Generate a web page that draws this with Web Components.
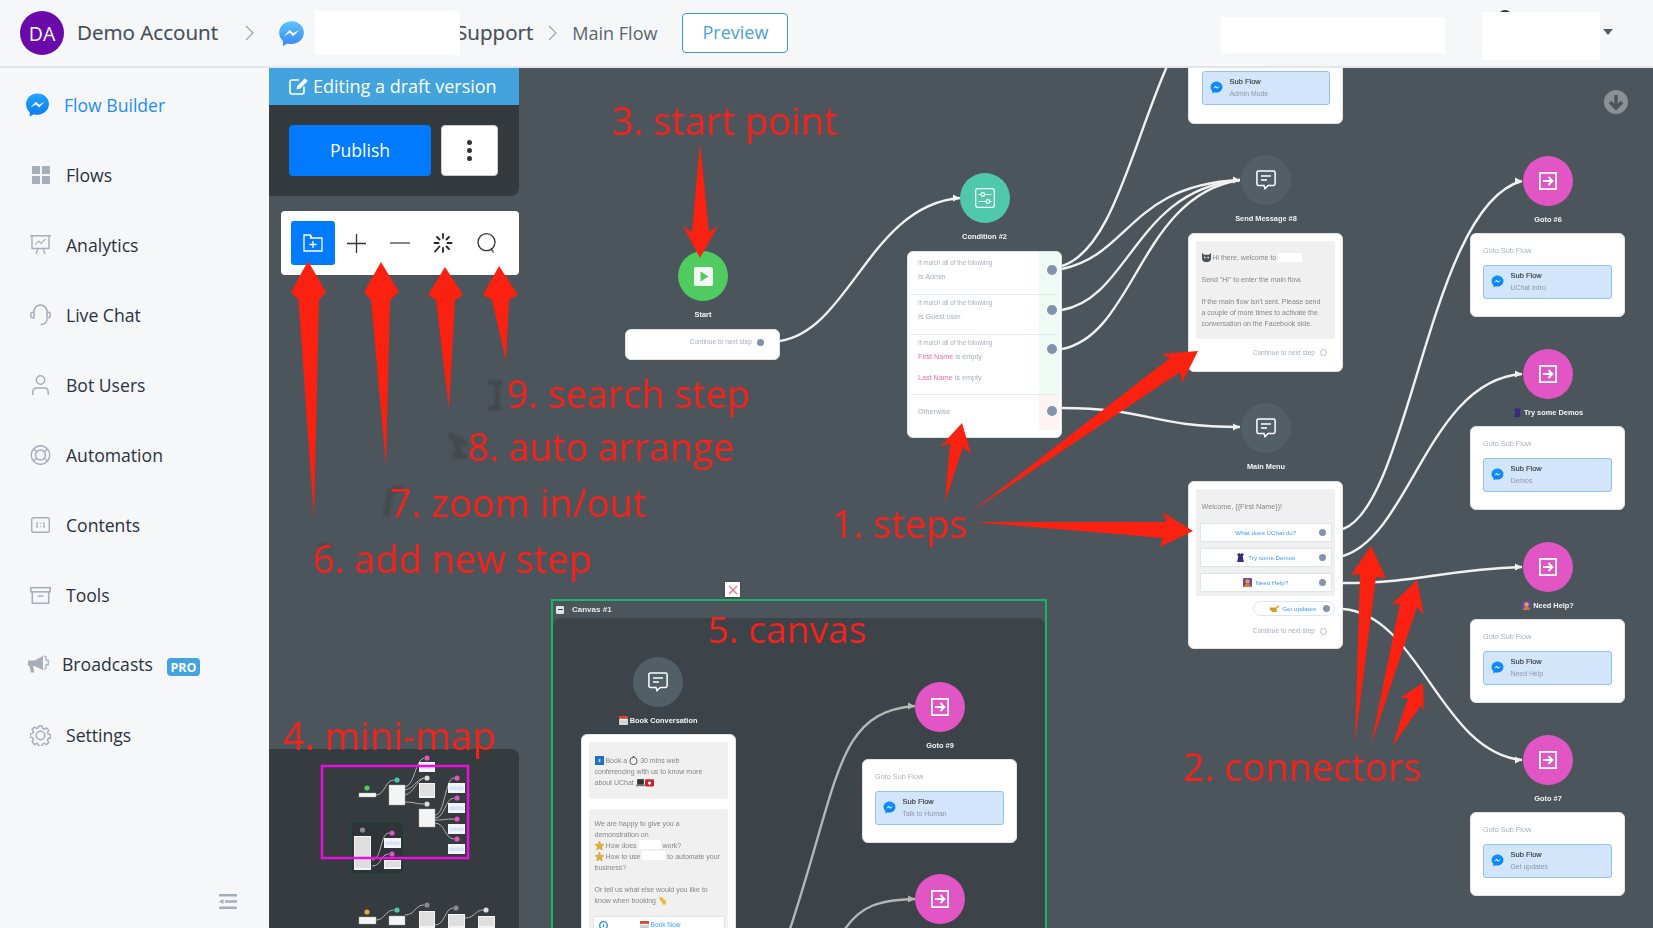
<!DOCTYPE html>
<html lang="en"><head><meta charset="utf-8"><title>Flow Builder</title>
<style>
html,body{margin:0;padding:0;height:100%;background:#4b555b;overflow:hidden}
body{font-family:"Open Sans",sans-serif}
</style>
<script>
const BUBBLE='M12 1C5.9 1 1 5.5 1 11.2c0 3 1.3 5.6 3.5 7.4V23l3.9-2.2c1.1.3 2.3.5 3.6.5 6.1 0 11-4.5 11-10.2S18.1 1 12 1z';
const ZIG='M5.2 14.4l5.2-5.6 3.1 3 5.2-3-5.2 5.6-3.1-3z';
let gid=0;
function bubble(s,a,b){const id='g'+(++gid);return `<svg width="${s}" height="${s}" viewBox="0 0 24 24" style="display:block"><defs><linearGradient id="${id}" x1="0" y1="0" x2="0" y2="1"><stop offset="0" stop-color="${a}"/><stop offset="1" stop-color="${b}"/></linearGradient></defs><path d="${BUBBLE}" fill="url(#${id})"/><path d="${ZIG}" fill="#fff"/></svg>`}
function def(name,css,html,extra){
  customElements.define(name,class extends HTMLElement{
    constructor(){super();this.attachShadow({mode:'open'})}
    connectedCallback(){
      if(this._done)return;this._done=1;
      const h=typeof html==='function'?html(this):html;
      this.shadowRoot.innerHTML=`<style>${css}</style>${h}`;
    }
  });
}
const ICONS={
 flows:'<svg width="18" height="18" viewBox="0 0 18 18" fill="#a7aeba"><rect width="8" height="8"/><rect x="10" width="8" height="8"/><rect y="10" width="8" height="8"/><rect x="10" y="10" width="8" height="8"/></svg>',
 analytics:'<svg width="21" height="20" viewBox="0 0 21 20" fill="none" stroke="#a7aeba" stroke-width="1.4"><path d="M0 .8h21M2 .8v12.7h17V.8M6 19l2-5.5M15 19l-2-5.5"/><path d="M5 10l3.5-4 2.5 2.5L15.500 4" stroke-width="1.1"/></svg>',
 chat:'<svg width="21" height="22" viewBox="0 0 21 22" fill="none" stroke="#a7aeba" stroke-width="1.5"><path d="M4 8V7.500a6.500 6.500 0 0 1 13 0V8M17 15c0 3.500-3 5.500-6.500 5.500"/><path d="M4 8.200H2.600C1.500 8.200.8 9 .8 10.200v1.600c0 1.200.7 2 1.800 2H4zM17 8.200h1.400c1.100 0 1.800.8 1.800 2v1.600c0 1.200-.7 2-1.800 2H17z"/></svg>',
 user:'<svg width="17" height="20" viewBox="0 0 17 20" fill="none" stroke="#a7aeba" stroke-width="1.500"><circle cx="8.500" cy="5" r="4.200"/><path d="M.8 20v-3c0-2.500 1.800-4 4-4h7.400c2.200 0 4 1.500 4 4v3"/></svg>',
 auto:'<svg width="21" height="20" viewBox="0 0 21 20" fill="none" stroke="#a7aeba" stroke-width="1.500"><circle cx="10.500" cy="10" r="9.300"/><circle cx="10.500" cy="10" r="5"/><path d="M3.500 4l3.500 3M17.500 4L14 7M3.500 16l3.500-3M17.500 16L14 13"/></svg>',
 contents:'<svg width="19" height="16" viewBox="0 0 19 16" fill="none" stroke="#a7aeba" stroke-width="1.400"><rect x=".7" y=".7" width="17.600" height="14.600" rx="1.500"/><path d="M6 5v6M13 5v6M9.500 6v1M9.500 9v1"/></svg>',
 tools:'<svg width="23" height="19" viewBox="0 0 23 19" fill="none" stroke="#a7aeba" stroke-width="1.700"><rect x=".9" y=".9" width="21.200" height="4.600"/><path d="M2.500 5.500V18h18V5.500M8.500 10h6"/></svg>',
 cast:'<svg width="21" height="19" viewBox="0 0 21 19"><path d="M0 5.500h6.500L15 1v14L6.500 11H5l1.500 6.500H3L1.500 11H0z" fill="#a7aeba"/><path d="M16 .7l2 1.300v3.200h2.200v4.600H18v3.400l-2 1.300" fill="none" stroke="#a7aeba" stroke-width="1.300"/></svg>',
 gear:'<svg width="21" height="21" viewBox="0 0 21 21" fill="none" stroke="#a7aeba" stroke-width="1.500"><circle cx="10.500" cy="10.500" r="4.200"/><path d="M8.800 1h3.400l.5 2.500 1.800.8L16.700 3l2.400 2.400-1.300 2.200.8 1.800 2.300.5v3.400l-2.400.5-.8 1.800 1.300 2.200-2.400 2.400-2.200-1.300-1.800.8-.5 2H8.800l-.5-2-1.800-.8-2.200 1.300L1.900 16.900l1.300-2.200-.8-1.800L0 12.400V9l2.400-.5.800-1.800L1.900 4.500 4.300 2.100l2.200 1.300 1.800-.8z" transform="translate(.3 .1) scale(.97)"/></svg>'
};
def('app-shell',`:host{display:grid;grid-template-columns:269px 1fr;grid-template-rows:68px 1fr;width:100%;height:100vh;overflow:hidden;font-family:"Open Sans",sans-serif}
 ::slotted(top-bar){grid-column:1/-1}`,'<slot></slot>');
def('top-bar',`:host{display:flex;align-items:center;background:#f6f7f9;border-bottom:2px solid #e4e6ea;box-sizing:border-box;height:68px;padding-left:20px;color:#454e56;position:relative;z-index:5}
 .av{width:44px;height:44px;border-radius:50%;background:#6a0aab;color:#fff;font-size:19.500px;display:flex;align-items:center;justify-content:center;flex:none}
 .name{font-size:20.600px;font-weight:500;margin-left:13px;margin-bottom:2px;color:#454e56;-webkit-text-stroke:.2px #454e56;white-space:nowrap}
 .chev{flex:none;display:block}
 .blank{background:#fff;position:relative;z-index:1;flex:none}
 .crumb{font-size:18px;color:#5b646b;margin-left:15px;margin-bottom:1px;white-space:nowrap}
 .prev{margin-left:25px;width:106px;height:40px;box-sizing:border-box;border:1.500px solid #3b95d8;border-radius:4px;background:#fff;color:#4a9fe0;font-size:18px;display:flex;align-items:center;justify-content:center;padding-bottom:2px}
 .right{margin-left:auto;display:flex;align-items:center;padding-right:40px;position:relative}
 .caret{width:0;height:0;border:5.500px solid transparent;border-top:6px solid #555e66;border-bottom:0;margin-left:3px;margin-top:-2px}
 .arc{position:absolute;width:14px;height:14px;border-radius:50%;background:#333;left:277px;top:4px}`,
 ()=>`<div class="av">DA</div><div class="name">Demo Account</div>
 <svg class="chev" style="margin-left:27px" width="9" height="16" viewBox="0 0 9 16" fill="none" stroke="#9aa1a8" stroke-width="1.100"><path d="M1 1l7 7-7 7"/></svg>
 <span style="margin-left:24px;display:block">${bubble(27,'#5cc6ff','#3a86f2')}</span>
 <div class="blank" style="margin-left:10px;width:145px;height:44px;margin-right:-4px"></div>
 <div class="name" style="margin-left:0">Support</div>
 <svg class="chev" style="margin-left:15px" width="9" height="16" viewBox="0 0 9 16" fill="none" stroke="#9aa1a8" stroke-width="1.100"><path d="M1 1l7 7-7 7"/></svg>
 <div class="crumb">Main Flow</div><div class="prev">Preview</div>
 <div class="right"><div class="blank" style="width:224px;height:36px;margin-top:3px"></div><div class="arc"></div><div class="blank" style="width:118px;height:48px;margin-left:37px;margin-top:6px"></div><div class="caret"></div></div>`);
def('side-nav',`:host{display:flex;flex-direction:column;background:#f6f7f9;padding-top:2px;height:860px;box-sizing:border-box;position:relative;z-index:4}
 .foot{margin-top:auto;align-self:flex-end;margin-right:32px;margin-bottom:19px}`,
 `<slot></slot><svg class="foot" width="18" height="15" viewBox="0 0 18 15" fill="#a5adba"><rect width="18" height="2.500"/><rect x="6" y="6.200" width="12" height="2.500"/><rect y="12.500" width="18" height="2.500"/><path d="M0 7.500L4.500 5v5z"/></svg>`);
def('nav-item',`:host{display:flex;align-items:center;box-sizing:border-box;height:70px;padding-left:var(--pl,30px);font-size:17.600px;color:#2a3240;flex:none}
 .ic{width:var(--iw,21px);margin-right:var(--gap,15px);display:flex;justify-content:center;flex:none}
 :host([active]){color:#1c8dff}
 .pro{background:#42a3df;color:#fff;font-weight:700;font-size:12.500px;border-radius:4px;width:33px;height:18px;display:flex;align-items:center;justify-content:center;margin-left:14px;margin-top:6px}`,
 e=>{const i=e.getAttribute('icon');const svg=i==='msg'?bubble(26,'#22a6ff','#0a78f0'):ICONS[i];
   return `<span class="ic">${svg}</span><span>${e.getAttribute('label')}</span>${e.hasAttribute('pro')?'<span class="pro">PRO</span>':''}`});
def('flow-canvas',`:host{display:block;position:relative;overflow:hidden;background:#4b555b}
 .stage{position:absolute;left:-269px;top:-68px;width:1653px;height:928px}`,'<div class="stage"><slot></slot></div>');
def('canvas-group',`:host{position:absolute;left:551px;top:599px;width:496px;height:340px;box-sizing:border-box;border:2px solid #15b765;filter:blur(.25px)}
 .hd{height:17px;display:flex;align-items:center;padding-left:3px;color:#e8eaec;font:bold 8px "Liberation Sans",sans-serif}
 .mn{width:8px;height:8px;background:#e3e4e6;margin-right:8px;border-radius:1px;display:flex;align-items:center;justify-content:center}
 .mn i{display:block;width:5px;height:1.300px;background:#444}
 .bd{position:absolute;left:0;right:0;top:17px;bottom:0;background:#3c4349;border-radius:8px 8px 0 0}
 .x{position:absolute;left:172px;top:-19px;width:15px;height:15px;background:#fff;box-shadow:0 0 2px #0004;display:flex;align-items:center;justify-content:center}`,
 `<div class="x"><svg width="10" height="10" viewBox="0 0 10 10" stroke="#ee6a95" stroke-width="1.200"><path d="M1 1l8 8M9 1L1 9"/></svg></div><div class="hd"><span class="mn"><i></i></span>Canvas #1</div><div class="bd"></div>`);
def('flow-links',`:host{position:absolute;left:0;top:0;width:1653px;height:928px;pointer-events:none;filter:blur(.2px)}`,
 ()=>{const L=[
  'M780 341C850 330 870 205 960 198',
  'M1062 266C1112 250 1132 145 1168 64',
  'M1062 269C1130 255 1130 185 1240 180',
  'M1062 310C1130 298 1135 190 1240 180',
  'M1062 349C1135 335 1140 195 1240 180',
  'M1062 408C1150 408 1150 427 1240 427',
  'M1343 529C1410 505 1429 205 1522 181',
  'M1343 556C1410 536 1429 380 1522 374',
  'M1343 583C1420 583 1440 570 1522 567',
  'M1343 609C1420 615 1440 752 1522 760'];
  const tips=[[960,198],[1240,180],[1240,427],[1522,181],[1522,374],[1522,567],[1522,760]];
  const G=['M788 935C840 780 835 712 915 706','M843 932C860 905 880 900 915 899'];
  const tipp=(x,y,c)=>`<path d="M${x-7} ${y-3.500}L${x} ${y}L${x-7} ${y+3.500}z" fill="${c}"/>`;
  return `<svg width="1653" height="928" viewBox="0 0 1653 928" fill="none" style="display:block">
  ${L.map(d=>`<path d="${d}" stroke="#f1f1f1" stroke-width="2.400"/>`).join('')}
  ${tips.map(t=>tipp(t[0],t[1],'#f1f1f1')).join('')}
  ${G.map(d=>`<path d="${d}" stroke="#b4b6b7" stroke-width="2.400"/>`).join('')}
  ${tipp(915,706,'#b4b6b7')}${tipp(915,899,'#b4b6b7')}</svg>`});
const NODE={
 start:'<svg width="19" height="19" viewBox="0 0 19 19"><rect width="19" height="19" rx="2" fill="#f4f6f5"/><path d="M6.500 4.500l8 5-8 5z" fill="#50cb5f"/></svg>',
 cond:'<svg width="20" height="20" viewBox="0 0 20 20" fill="none" stroke="#fff" stroke-width="1.200"><rect x=".7" y=".7" width="18.600" height="18.600" rx="2"/><path d="M3.500 6.500h2.500M9.500 6.500h7M3.500 13.500h7.500M14.500 13.500h2" /><circle cx="7.800" cy="6.500" r="1.800"/><circle cx="12.800" cy="13.500" r="1.800"/></svg>',
 msg:'<svg width="20" height="20" viewBox="0 0 20 20" fill="none" stroke="#fff" stroke-width="1.500"><path d="M2.500.9h15c.9 0 1.600.7 1.600 1.600v11.300c0 .9-.7 1.600-1.600 1.600h-5.300L9 18.500l-1-3.100H2.500c-.9 0-1.600-.7-1.600-1.600V2.500c0-.9.7-1.600 1.600-1.600z"/><path d="M5 6h10M5 10h6"/></svg>',
 goto:'<svg width="18" height="18" viewBox="0 0 18 18" fill="none" stroke="#fff"><rect x=".9" y=".9" width="16.200" height="16.200" stroke-width="1.800"/><path d="M4 9h9M9.500 5l3.800 4-3.800 4" stroke-width="2"/></svg>'};
const NC={start:'#50cb5f',cond:'#4fc8ab',msg:'#535f67',goto:'#e255c4'};
def('flow-node',`:host{position:absolute;width:160px;display:flex;flex-direction:column;align-items:center;color:#f4f4f4;font:bold 7.400px/9px "Liberation Sans",sans-serif;white-space:nowrap;filter:blur(.3px)}
 .c{width:50px;height:50px;border-radius:50%;display:flex;align-items:center;justify-content:center;margin-bottom:9px}`,
 e=>{const k=e.getAttribute('kind');return `<div class="c" style="background:${NC[k]}">${NODE[k]}</div><div><slot></slot></div>`});
def('mini-emoji',`:host{display:inline-block;width:var(--s,9px);height:var(--s,9px);vertical-align:-2px}svg{display:block;width:100%;height:100%}`,
 e=>({dress:'<svg viewBox="0 0 8 8"><path d="M1 1l2-1 1 1 1-1 2 1-1 2 1 5H1l1-5z" fill="#3a2a78"/></svg>',
  person:'<svg viewBox="0 0 8 8"><rect width="8" height="8" rx="1" fill="#6b45a8"/><circle cx="4" cy="3" r="2" fill="#e0a04c"/><path d="M1 8c0-2 1-3 3-3s3 1 3 3z" fill="#c87f30"/></svg>',
  cal:'<svg viewBox="0 0 8 8"><rect width="8" height="8" fill="#f0f0f0" stroke="#888" stroke-width=".5"/><rect width="8" height="2.500" fill="#d9442f"/><path d="M1 4.500h6M1 6h6" stroke="#aaa" stroke-width=".7"/></svg>',
  book:'<svg viewBox="0 0 8 8"><rect width="8" height="8" fill="#1f6fc9"/><rect x="3.200" y="2.500" width="1.600" height="3" fill="#bcd8f5"/></svg>',
  watch:'<svg viewBox="0 0 8 8"><circle cx="4" cy="4.500" r="3.200" fill="#fff" stroke="#444" stroke-width=".8"/><rect x="3.200" y=".1" width="1.600" height="1" fill="#444"/></svg>',
  laptop:'<svg viewBox="0 0 8 8"><rect x="1" y="1" width="6" height="5" fill="#333"/><rect x="0" y="6" width="8" height="1.300" fill="#777"/></svg>',
  phone:'<svg viewBox="0 0 8 8"><rect y="1" width="8" height="6.500" rx="1" fill="#c8222e"/><circle cx="4" cy="4.500" r="1.500" fill="#eee"/></svg>',
  star:'<svg viewBox="0 0 8 8"><path d="M4 0l1.200 2.800L8 3.100 5.900 5l.6 3L4 6.500 1.500 8l.6-3L0 3.100l2.800-.3z" fill="#e8b02e" stroke="#a5791a" stroke-width=".3"/></svg>',
  hand:'<svg viewBox="0 0 8 8"><path d="M1 1h3l1 2 2 1 0 3-2 1-2-3-1-1z" fill="#e9b83c"/></svg>',
  cat:'<svg viewBox="0 0 8 8"><path d="M0 0l2 1.500h4L8 0v5c0 2-2 3-4 3S0 7 0 5z" fill="#4d5155"/><circle cx="2.500" cy="4" r=".8" fill="#ddd"/><circle cx="5.500" cy="4" r=".8" fill="#ddd"/></svg>',
  point:'<svg viewBox="0 0 8 8"><path d="M0 3l5 0 3-2v1.500L6 4v3H2L0 5z" fill="#d69a28"/></svg>',
  fb:'<svg viewBox="0 0 8 8"><circle cx="4" cy="4" r="3.400" fill="none" stroke="#2c8ef5" stroke-width="1.200"/><path d="M3.500 2.500h1v3h-1z" fill="#2c8ef5"/></svg>'}[e.getAttribute('kind')]));
def('step-card',`:host{position:absolute;width:155px;box-sizing:border-box;background:#fff;border-radius:6px;border:1px solid #e4e4e4;font-family:"Liberation Sans",sans-serif;filter:blur(.3px);overflow:hidden}`,'<slot></slot>');
def('msg-bubble',`:host{display:block;background:#f0f0f0;margin:7px 7px 0;padding:0 5.500px;border-radius:2px;color:#868686;font:7px/11px "Liberation Sans",sans-serif;white-space:pre-line}`,'<slot></slot>');
def('blank-box',`:host{display:inline-block;background:#fff;height:9px;vertical-align:-1.500px}`,'');
def('cont-row',`:host{display:flex;justify-content:flex-end;align-items:center;color:#a7aec0;font:6.600px/8px "Liberation Sans",sans-serif;white-space:nowrap}
 .d{width:7px;height:7px;border-radius:50%;background:#8393ac;margin-left:5px;box-sizing:border-box}
 :host([open]) .d{background:#fff;border:1px solid #b7bfcb}`,'<slot></slot><span class="d"></span>');
def('cond-row',`:host{display:grid;grid-template-columns:1fr 20px;box-sizing:border-box;border-bottom:1px solid #e6ebf3;margin:0 2px 0 2px;font:7.200px/8px "Liberation Sans",sans-serif;color:#a6adbc}
 :host([last]){border-bottom:0}
 .t{padding:var(--pt,4px) 0 0 8px}
 .s{background:#edfbf4;display:flex;justify-content:flex-end;padding-right:2px;align-items:flex-start}
 :host([last]) .s{background:#fdf3f3}
 .d{width:10px;height:10px;border-radius:50%;background:#8393ac;margin-top:var(--dt,11px)}`,
 '<div class="t"><slot></slot></div><div class="s"><span class="d"></span></div>');
def('cond-head',`:host{display:block;font-size:6.300px;line-height:8px;color:#a9b0be;white-space:nowrap;margin-bottom:5.500px}`,'<slot></slot>');
def('cond-line',`:host{display:block;white-space:nowrap;margin-bottom:var(--mb,0)}`,'<slot></slot>');
def('pink-t',`:host{color:#ee6ea9}`,'<slot></slot>');
def('reply-btn',`:host{display:flex;align-items:center;justify-content:center;position:relative;background:#fff;border:1px solid #dfe5ef;box-sizing:border-box;height:19px;margin:0 -2px 6px -1.500px;color:#3c9cff;font:6.200px/8px "Liberation Sans",sans-serif;white-space:nowrap}
 .d{position:absolute;right:5px;top:5px;width:7px;height:7px;border-radius:50%;background:#8393ac}
 :host([nodot]) .d{display:none}`,'<slot></slot><span class="d"></span>');
def('pill-btn',`:host{display:flex;align-items:center;justify-content:flex-end;box-sizing:border-box;height:15px;width:82px;margin:5px 7px 0 auto;border:1px solid #dfe5ef;border-radius:8px;color:#3c9cff;font:6.200px/8px "Liberation Sans",sans-serif;white-space:nowrap;padding-right:4px}
 .d{width:7px;height:7px;border-radius:50%;background:#8393ac;margin-left:7px}`,'<slot></slot><span class="d"></span>');
def('sub-flow',`:host{display:flex;align-items:center;box-sizing:border-box;height:34px;background:#d2e5fb;border:1.500px solid #8cc2f7;border-radius:3px;padding-left:7px;padding-bottom:1px;font-family:"Liberation Sans",sans-serif}
 .ic{width:13px;flex:none;margin-right:6.500px}
 .n{font-size:7.500px;line-height:9px;color:#3b4044;font-weight:400;-webkit-text-stroke:.15px #3b4044}
 .m{font-size:6.900px;line-height:8px;color:#8e97a6;margin-top:4px}`,
 e=>`<span class="ic">${bubble(13,'#1192ff','#0a80f5')}</span><div><div class="n">Sub Flow</div><div class="m">${e.getAttribute('sub')}</div></div>`);
def('goto-card',`:host{position:absolute;width:155px;height:84px;box-sizing:border-box;background:#fff;border:1px solid #e4e4e4;border-radius:6px;padding:12px 12px 0;font:7.300px/9px "Liberation Sans",sans-serif;color:#a9b0bd;filter:blur(.3px);overflow:hidden}
 sub-flow{margin-top:9.500px}`,e=>`<div>Goto Sub Flow</div><sub-flow sub="${e.getAttribute('sub')}"></sub-flow>`);
def('flow-panel',`:host{position:absolute;left:269px;top:68px;width:250px}
 .bar{height:37px;background:#42a3df;color:#fff;display:flex;align-items:center;padding:0 0 2px 20px;box-sizing:border-box;font-size:18px}
 .bar svg{margin-right:4px}
 .dark{background:#343a3e;border-radius:0 0 8px 0;height:91px;box-sizing:border-box;padding:20px;display:flex;gap:10px}
 .pub{width:142px;height:51px;box-sizing:border-box;padding-bottom:2px;background:#007bff;border-radius:4px;color:#fff;font-size:17.600px;display:flex;align-items:center;justify-content:center}
 .more{width:57px;height:51px;background:#fff;border:1px solid #ccc;border-radius:4px;box-sizing:border-box;display:flex;flex-direction:column;align-items:center;justify-content:center;gap:3px}
 .more i{display:block;width:5px;height:5px;border-radius:50%;background:#333}
 .tb{margin:15px 0 0 12px;width:238px;height:64px;background:#fff;border-radius:4px;display:flex;align-items:center;padding-left:10px;box-sizing:border-box}
 .b{width:43.500px;height:44px;display:flex;align-items:center;justify-content:center;flex:none;border-radius:3px}
 .b.on{background:#007bff}`,
 `<div class="bar"><svg width="20" height="18" viewBox="0 0 20 18" fill="none" stroke="#fff" stroke-width="1.600"><path d="M15 9.500V15a2 2 0 0 1-2 2H3a2 2 0 0 1-2-2V5a2 2 0 0 1 2-2h7"/><path d="M7.500 12.500l.7-3.500L16 1.200l2.800 2.800L11 11.800z" fill="#fff" stroke="none"/></svg>Editing a draft version</div>
 <div class="dark"><div class="pub">Publish</div><div class="more"><i></i><i></i><i></i></div></div>
 <div class="tb"><div class="b on"><svg width="20" height="18" viewBox="0 0 20 18" fill="none" stroke="#fff" stroke-width="1.300"><path d="M1 1h6.500l1.500 3h10v13H1zM7.500 1v3H9M6.500 10.500h7M10 7v7"/></svg></div>
 <div class="b"><svg width="19" height="19" viewBox="0 0 19 19" stroke="#333" stroke-width="1.300"><path d="M9.500 0v19M0 9.500h19"/></svg></div>
 <div class="b"><svg width="20" height="2" viewBox="0 0 20 2" stroke="#444" stroke-width="1.300"><path d="M0 1h20"/></svg></div>
 <div class="b"><svg width="20" height="20" viewBox="0 0 20 20" stroke="#222" stroke-width="1.800" stroke-linecap="round"><path d="M10 1v4M10 15v4M1.500 10h4M14.500 10h4M4 4l2.500 2.500M16 4l-2.500 2.500M13.500 13.500L16 16M6.500 13.500L2 18.500"/></svg></div>
 <div class="b"><svg width="20" height="20" viewBox="0 0 20 20" fill="none" stroke="#333" stroke-width="1.300"><circle cx="9.500" cy="9.200" r="8.500"/><path d="M14 15.500l2.500 4"/></svg></div></div>`);
def('mini-map',`:host{position:absolute;left:269px;top:749px;width:250px;height:179px;background:#353b3f;border-radius:0 8px 0 0;overflow:hidden}svg{display:block;filter:blur(.3px)}`,
 ()=>{
  const c=(x,y,f)=>`<circle cx="${x}" cy="${y}" r="2.600" fill="${f}"/>`;
  const card=(x,y,w,h)=>`<rect x="${x}" y="${y}" width="${w}" height="${h}" fill="#f4f4f4" stroke="#aaa" stroke-width=".4"/>`;
  const blue=(x,y,w,h)=>`<rect x="${x}" y="${y}" width="${w}" height="${h}" fill="#f4f4f4"/><rect x="${x+1.500}" y="${y+3.500}" width="${w-3}" height="3.500" fill="#d2e5fb"/>`;
  const grey=(x,y,w,h)=>`<rect x="${x}" y="${y}" width="${w}" height="${h}" fill="#f4f4f4"/><rect x="${x+1}" y="${y+1}" width="${w-2}" height="${h-3}" fill="#dedede"/>`;
  const l=(d,s='#aeb0b1')=>`<path d="${d}" fill="none" stroke="${s}" stroke-width="1"/>`;
  let g='';
  g+=`<rect x="351" y="822" width="53" height="52" fill="#2f3438" stroke="#1c4a3a"/>`;
  [`M376 795C385 795 385 780 394 780`,`M405 787C415 785 415 760 424 758`,`M405 790C415 788 415 780 424 778`,`M405 795C415 792 415 782 424 778`,`M405 802C415 802 415 804 424 804`,`M435 815C445 815 445 778 454 778`,`M435 818C445 818 445 798 454 798`,`M435 820C445 820 445 819 454 819`,`M435 823C445 823 445 839 454 839`,`M372 860C382 860 380 833 389 833`,`M372 866C382 866 380 854 389 854`,`M376 920C385 920 385 910 394 910`,`M405 915C415 915 415 905 424 905`,`M435 925C445 925 445 908 453 908`,`M465 918C475 918 475 910 483 910`].forEach(d=>g+=l(d));
  g+=c(367,788,'#50cb5f')+card(359,793,17,4);
  g+=c(397,780,'#4fc8ab')+card(389,785,16,20);
  g+=c(427,758,'#e255c4')+blue(419,762,16,10);
  g+=c(427,778,'#dcdcdc')+grey(419,783,16,15);
  g+=c(427,804,'#dcdcdc')+card(419,809,16,18);
  [778,798,819,839].forEach(y=>{g+=c(457,y,'#e255c4')+blue(448,y+5,17,10)});
  g+=c(362.500,830,'#8c8c8c')+grey(354,836,17,34);
  g+=c(392,833,'#e255c4')+blue(384,838,17,10);
  g+=c(392,854,'#e255c4')+grey(384,860,17,9);
  g+=c(367,912,'#e5a83c')+card(359,917,17,7);
  g+=c(397,910,'#4fc8ab')+card(389,916,16,9);
  g+=c(427,905,'#8c8c8c')+grey(419,911,16,17);
  g+=c(456,908,'#8c8c8c')+grey(448,914,17,14);
  g+=c(486,910,'#dcdcdc')+grey(478,916,17,12);
  g+=`<rect x="322" y="766" width="146" height="92" fill="none" stroke="#ea0ee0" stroke-width="2.500"/>`;
  return `<svg width="250" height="179" viewBox="269 749 250 179">${g}</svg>`});
def('down-badge',`:host{position:absolute;left:1604px;top:90px;width:24px;height:24px}`,
 `<svg width="24" height="24" viewBox="0 0 24 24"><circle cx="12" cy="12" r="12" fill="#8b9095"/><path d="M12 5v13M6 12l6 6 6-6" fill="none" stroke="#4b555b" stroke-width="3.500"/></svg>`);
def('red-note',`:host{position:absolute;color:#f5231b;font:38px/40px "Open Sans",sans-serif;white-space:nowrap}`,'<slot></slot>');
def('red-arrows',`:host{position:absolute;left:0;top:0;width:1653px;height:928px;pointer-events:none}svg{display:block}`,
 ()=>{const P=[
 '700,143 709,232 718,226 700,258 683,226 692,232',
 '314,519 319,300 326,292 308,261 291,292 298.500,300',
 '386,466 390,300 399,292 381,262 364,292 371,300',
 '449,409 455,300 463,295 445,267 428,295 436,300',
 '506,361 509,300 518,295 499,266 483,295 492,300',
 '945,502 963,447 971,454 962,423 940,447 950,443',
 '971,512 1180,372 1182,383 1198,351 1161,354 1170,358',
 '973,522 1163,538 1160,547 1193,531 1162,512 1167,522',
 '1355,742 1376,577 1386,578 1371,546 1351,575 1360,574',
 '1371,745 1417,607 1424,615 1417,580 1391,605 1400,603',
 '1392,747 1421,705 1424,711 1423,683 1400,698 1408,698'];
 return `<svg width="1653" height="928" viewBox="0 0 1653 928">
 <g fill="none" stroke="#44494d" stroke-width="5" style="filter:blur(.8px)"><path d="M488 383h14M497 383v24M489 408h12" /><path d="M449 434l8 6M453 443h14M453 456h14M460 437l-3 20" stroke-width="6"/><path d="M402 489q-11-2-13 8l-3 19" stroke-width="6"/><path d="M318 545h12v7" stroke-width="3" opacity=".7"/></g>
 ${P.map(p=>`<polygon points="${p}" fill="#fb2110"/>`).join('')}</svg>`});
</script></head>
<body>
<app-shell>
  <top-bar></top-bar>
  <side-nav>
    <nav-item active icon="msg" label="Flow Builder" style="--pl:25px;--iw:25px;--gap:14px"></nav-item>
    <nav-item icon="flows" label="Flows"></nav-item>
    <nav-item icon="analytics" label="Analytics"></nav-item>
    <nav-item icon="chat" label="Live Chat"></nav-item>
    <nav-item icon="user" label="Bot Users"></nav-item>
    <nav-item icon="auto" label="Automation"></nav-item>
    <nav-item icon="contents" label="Contents"></nav-item>
    <nav-item icon="tools" label="Tools"></nav-item>
    <nav-item icon="cast" label="Broadcasts" pro style="--pl:28px;--gap:13px;padding-bottom:2px"></nav-item>
    <nav-item icon="gear" label="Settings"></nav-item>
  </side-nav>
  <flow-canvas>
    <canvas-group></canvas-group>
    <flow-links></flow-links>
    <down-badge></down-badge>

    <flow-node kind="start" style="left:623px;top:251px">Start</flow-node>
    <step-card style="left:625px;top:329px;height:31px;padding:8px 15px 0 0"><cont-row>Continue to next step</cont-row></step-card>

    <flow-node kind="cond" style="left:904.500px;top:173px">Condition #2</flow-node>
    <step-card style="left:907px;top:251px;height:187px">
      <cond-row style="height:43px;--pt:7px;--dt:13px"><cond-head>If match all of the following</cond-head><cond-line>Is Admin</cond-line></cond-row>
      <cond-row style="height:40px;--dt:10px"><cond-head>If match all of the following</cond-head><cond-line>Is Guest user</cond-line></cond-row>
      <cond-row style="height:60px;--dt:9px"><cond-head>If match all of the following</cond-head><cond-line style="--mb:13px"><pink-t>First Name</pink-t> is empty</cond-line><cond-line><pink-t>Last Name</pink-t> is empty</cond-line></cond-row>
      <cond-row last style="height:35px;--pt:13px;--dt:11px">Otherwise</cond-row>
    </step-card>

    <step-card style="left:1188px;top:39px;height:85px;padding:31px 12px 0 13px"><sub-flow sub="Admin Mode"></sub-flow></step-card>

    <flow-node kind="msg" style="left:1186px;top:155px">Send Message #8</flow-node>
    <step-card style="left:1188px;top:233px;height:139px">
      <msg-bubble style="padding-top:11px;padding-bottom:9.500px"><mini-emoji kind="cat"></mini-emoji> Hi there, welcome to <blank-box style="width:24px"></blank-box>

Send "Hi" to enter the main flow.

If the main flow isn't sent. Please send
a couple of more times to activate the
conversation on the Facebook side.</msg-bubble>
      <cont-row open style="margin:10px 15px 0 0">Continue to next step</cont-row>
    </step-card>

    <flow-node kind="msg" style="left:1186px;top:403px">Main Menu</flow-node>
    <step-card style="left:1188px;top:481px;height:168px">
      <msg-bubble style="padding:12px 5.500px 4px"><div style="margin-bottom:11px;font-size:7.200px">Welcome, {{First Name}}!</div><reply-btn>What does UChat do?</reply-btn><reply-btn><mini-emoji kind="dress" style="margin-right:3px"></mini-emoji>Try some Demos</reply-btn><reply-btn style="margin-bottom:0"><mini-emoji kind="person" style="margin-right:3px"></mini-emoji>Need Help?</reply-btn></msg-bubble>
      <pill-btn><mini-emoji kind="point" style="margin-right:3px"></mini-emoji>Get updates</pill-btn>
      <cont-row open style="margin:11px 15px 0 0">Continue to next step</cont-row>
    </step-card>

    <flow-node kind="goto" style="left:1468px;top:156px">Goto #6</flow-node>
    <goto-card sub="UChat Intro" style="left:1470px;top:233px"></goto-card>
    <flow-node kind="goto" style="left:1468px;top:349px"><mini-emoji kind="dress"></mini-emoji> Try some Demos</flow-node>
    <goto-card sub="Demos" style="left:1470px;top:426px"></goto-card>
    <flow-node kind="goto" style="left:1468px;top:542px"><mini-emoji kind="person"></mini-emoji> Need Help?</flow-node>
    <goto-card sub="Need Help" style="left:1470px;top:619px"></goto-card>
    <flow-node kind="goto" style="left:1468px;top:735px">Goto #7</flow-node>
    <goto-card sub="Get updates" style="left:1470px;top:812px"></goto-card>

    <flow-node kind="msg" style="left:578px;top:657px"><mini-emoji kind="cal"></mini-emoji> Book Conversation</flow-node>
    <step-card style="left:581px;top:734px;height:220px">
      <msg-bubble style="padding-top:13px;padding-bottom:11px"><mini-emoji kind="book"></mini-emoji> Book a <mini-emoji kind="watch"></mini-emoji> 30 mins web
conferencing with us to know more
about UChat <mini-emoji kind="laptop"></mini-emoji><mini-emoji kind="phone"></mini-emoji></msg-bubble>
      <msg-bubble style="margin-top:10px;padding-top:8.500px;height:130px">We are happy to give you a
demonstration on
<mini-emoji kind="star"></mini-emoji> How does <blank-box style="width:22px"></blank-box> work?
<mini-emoji kind="star"></mini-emoji> How to use <blank-box style="width:23px"></blank-box> to automate your
business?

Or tell us what else would you like to
know when booking <mini-emoji kind="hand"></mini-emoji>
<reply-btn nodot style="margin:10px -2px 0 -2px;justify-content:flex-start;padding-left:5px;font-size:6.600px"><mini-emoji kind="fb" style="margin-right:32px"></mini-emoji><mini-emoji kind="cal" style="margin-right:2px"></mini-emoji><u>Book Now</u></reply-btn></msg-bubble>
    </step-card>

    <flow-node kind="goto" style="left:860px;top:682px">Goto #9</flow-node>
    <goto-card sub="Talk to Human" style="left:862px;top:759px"></goto-card>
    <flow-node kind="goto" style="left:860px;top:874px"></flow-node>

    <flow-panel></flow-panel>
    <mini-map></mini-map>
    <red-arrows></red-arrows>

    <red-note style="left:612px;top:100px">3. start point</red-note>
    <red-note style="left:832px;top:503px">1. steps</red-note>
    <red-note style="left:1183px;top:746px">2. connectors</red-note>
    <red-note style="left:283px;top:715px;font-size:38.400px">4. mini-map</red-note>
    <red-note style="left:708px;top:609px;font-size:37.200px">5. canvas</red-note>
    <red-note style="left:313px;top:538px">6. add new step</red-note>
    <red-note style="left:390px;top:482px">7. zoom in/out</red-note>
    <red-note style="left:468px;top:427px;font-size:37.400px">8. auto arrange</red-note>
    <red-note style="left:507px;top:374px;font-size:37.700px">9. search step</red-note>
  </flow-canvas>
</app-shell>
</body></html>
